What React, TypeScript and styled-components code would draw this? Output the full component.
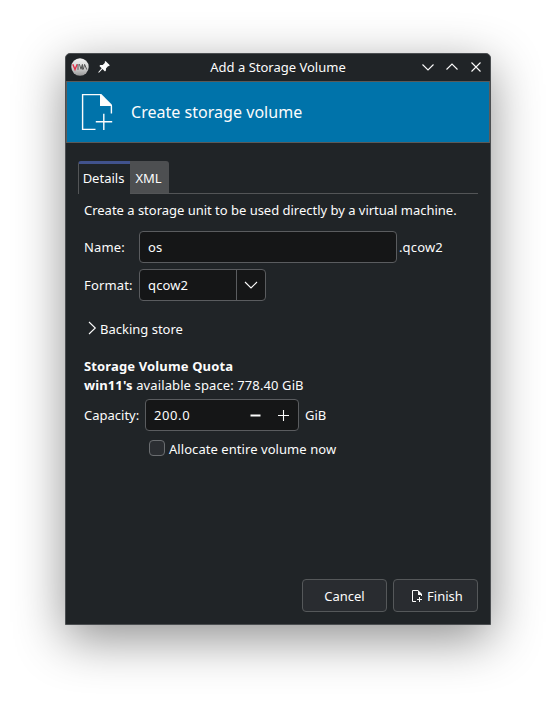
import React from "react";
import styled, { createGlobalStyle } from "styled-components";

const line = "#535557";

const Global = createGlobalStyle`
  * { box-sizing: border-box; }
  body {
    margin: 0;
    background: #fff;
    font-family: "Noto Sans", sans-serif;
    font-size: 13px;
    line-height: 18px;
    color: #fcfcfc;
  }
  button, input { font: inherit; color: inherit; letter-spacing: inherit; }
`;

const Desktop = styled.main`
  height: 702px;
  padding: 53px 65px 0;
  overflow: hidden;
`;

const Window = styled.section`
  width: 426px;
  height: 572px;
  display: flex;
  flex-direction: column;
  background: #202427;
  border: 1px solid #4b4e51;
  border-radius: 5px 5px 0 0;
  box-shadow: 0 14px 50px rgba(0, 0, 0, 0.44);
`;

const TitleBar = styled.header`
  height: 27px;
  flex: none;
  display: grid;
  grid-template-columns: 78px 1fr 78px;
  align-items: center;
`;

const TitleIcons = styled.div`
  display: flex;
  align-items: center;
  gap: 9px;
  padding-left: 5px;
  margin-top: -1px;
`;

const Title = styled.h1`
  margin: 0 0 1px;
  font-size: 13px;
  font-weight: 400;
  text-align: center;
`;

const WindowButtons = styled.div`
  display: flex;
  justify-content: flex-end;
  gap: 12px;
  padding-right: 8px;
  margin-top: -1px;
`;

const Icon = styled.svg`
  display: block;
  flex: none;
  overflow: visible;
`;

const Banner = styled.div`
  height: 62px;
  flex: none;
  display: flex;
  align-items: center;
  gap: 18px;
  padding-left: 14px;
  background: #0073aa;
  border: 1px solid #5b5a59;
`;

const BannerText = styled.h2`
  margin: 0;
  font-size: 16px;
  line-height: 22px;
  font-weight: 400;
  letter-spacing: 0.03px;
`;

const Body = styled.div`
  flex: 1;
  display: flex;
  flex-direction: column;
  padding: 18px 12px 12px;
`;

const Tabs = styled.nav`
  height: 33px;
  flex: none;
  display: flex;
  border-bottom: 1px solid ${line};
`;

const Tab = styled.button<{ $active?: boolean; $width: number }>`
  width: ${(p) => p.$width}px;
  height: ${(p) => (p.$active ? 33 : 32)}px;
  padding: ${(p) => (p.$active ? "0 2px 2px 0" : "2px 2px 0 0")};
  border: 0;
  border-left: ${(p) => (p.$active ? `1px solid ${line}` : "0")};
  border-top: ${(p) => (p.$active ? "3px solid #41528c" : "0")};
  border-radius: ${(p) => (p.$active ? "3px 0 0 0" : "0 3px 0 0")};
  background: ${(p) => (p.$active ? "#202427" : "#4d4f51")};
`;

const Page = styled.div`
  flex: 1;
  display: flex;
  flex-direction: column;
  padding: 7px 6px 0;
`;

const Row = styled.div<{ $top?: number; $height?: number; $left?: number; $tracking?: number }>`
  height: ${(p) => p.$height ?? 32}px;
  flex: none;
  display: flex;
  align-items: center;
  white-space: nowrap;
  margin-top: ${(p) => p.$top ?? 0}px;
  padding-left: ${(p) => p.$left ?? 0}px;
  letter-spacing: ${(p) => p.$tracking ?? 0}px;
`;

const Label = styled.label<{ $width: number }>`
  width: ${(p) => p.$width}px;
  flex: none;
`;

const Field = styled.div<{ $width: number }>`
  width: ${(p) => p.$width}px;
  height: 32px;
  flex: none;
  display: flex;
  align-items: center;
  background: #151617;
  border: 1px solid #5a5c5f;
  border-radius: 4px;
`;

const TextInput = styled.input<{ $tracking?: number }>`
  flex: 1;
  min-width: 0;
  height: 30px;
  padding: 0 8px;
  border: 0;
  outline: 0;
  background: transparent;
  letter-spacing: ${(p) => p.$tracking ?? 0.14}px;
`;

const DropButton = styled.span`
  width: 29px;
  height: 30px;
  display: grid;
  place-items: center;
  border-left: 1px solid #5a5c5f;
`;

const Stepper = styled.span`
  display: flex;
  gap: 17px;
  padding-right: 9px;
`;

const Suffix = styled.span<{ $gap: number }>`
  margin-left: ${(p) => p.$gap}px;
`;

const CheckBox = styled.span`
  width: 16px;
  height: 16px;
  margin: -2px 4px 0 0;
  background: #2b2e32;
  border: 1px solid #6a6d70;
  border-radius: 4px;
`;

const Actions = styled.footer`
  display: flex;
  justify-content: flex-end;
  gap: 6px;
`;

const Button = styled.button<{ $nudge?: number }>`
  width: 85px;
  height: 33px;
  display: flex;
  align-items: center;
  justify-content: center;
  gap: 4px;
  padding: 0 0 0 ${(p) => p.$nudge ?? 0}px;
  background: #292c30;
  border: 1px solid #55585a;
  border-radius: 4px;
`;

const Logo = () => (
  <Icon width="18" height="18" viewBox="0 0 18 18">
    <defs>
      <linearGradient id="disc" x1="0" y1="0" x2="0" y2="1">
        <stop offset="0" stopColor="#f2f2f2" />
        <stop offset="0.55" stopColor="#d2d2d2" />
        <stop offset="1" stopColor="#999" />
      </linearGradient>
    </defs>
    <circle cx="9" cy="9" r="8.7" fill="url(#disc)" />
    <path d="M1.8 6.2L4 11.4L6.2 6.2" fill="none" stroke="#e2304a" strokeWidth="1.4" />
    <path d="M7 6v5.8M8.4 6.2L10 11.2L11.4 6.4V11.6M12.2 11.6L13.6 6.4L15.8 11.6" fill="none" stroke="#555" strokeWidth="1" />
  </Icon>
);

const Pin = () => (
  <Icon width="12" height="12" viewBox="0 0 12 12" fill="#fcfcfc">
    <path d="M7.5 0L11.8 4.3L10.8 5.3L10.2 5L8 7.4L7.9 9.6L7 10.5L4.5 8.1L1.2 11.4L.3 11.7L.6 10.8L3.7 7.3L1.4 5L2.3 4.1L4.7 4L7 1.8L6.6 .9Z" />
  </Icon>
);

const Stroke = ({ w, h, d }: { w: number; h: number; d: string }) => (
  <Icon width={w} height={h} viewBox={`0 0 ${w} ${h}`} fill="none" stroke="#fcfcfc" strokeWidth="1.1">
    <path d={d} />
  </Icon>
);

const BigDoc = () => (
  <Icon width="32" height="38" viewBox="0 0 32 38" fill="none" stroke="#fcfcfc" strokeWidth="1.4">
    <path d="M14.5 36.4H1.6V1.6H19M30.4 13V20.5M22.8 20.7V37M14.8 28.7H31.2" />
    <path d="M19 1H20.3L31 11.7V13H19Z" fill="#fcfcfc" stroke="none" />
  </Icon>
);

const SmallDoc = () => (
  <Icon width="12" height="13" viewBox="0 0 12 13" fill="none" stroke="#fcfcfc">
    <path d="M5 12.5H1.5V1.5H7M10.5 5V7M8.5 8V13M6 10.5H11" />
    <path d="M7 1L11 5V6H7Z" fill="#fcfcfc" stroke="none" />
  </Icon>
);

export default function App() {
  return (
    <Desktop>
      <Global />
      <Window>
        <TitleBar>
          <TitleIcons>
            <Logo />
            <Pin />
          </TitleIcons>
          <Title>Add a Storage Volume</Title>
          <WindowButtons>
            <Stroke w={12} h={12} d="M.5 3.5L6 9L11.5 3.5" />
            <Stroke w={12} h={12} d="M.5 8.5L6 3L11.5 8.5" />
            <Stroke w={12} h={12} d="M1.5 1.5L10.5 10.5M10.5 1.5L1.5 10.5" />
          </WindowButtons>
        </TitleBar>
        <Banner>
          <BigDoc />
          <BannerText>Create storage volume</BannerText>
        </Banner>
        <Body>
          <Tabs>
            <Tab $active $width={52}>Details</Tab>
            <Tab $width={39}>XML</Tab>
          </Tabs>
          <Page>
            <Row $height={18} $tracking={-0.015}>Create a storage unit to be used directly by a virtual machine.</Row>
            <Row $top={12} $tracking={0.14}>
              <Label $width={55}>Name:</Label>
              <Field $width={258}>
                <TextInput defaultValue="os" />
              </Field>
              <Suffix $gap={2}>.qcow2</Suffix>
            </Row>
            <Row $top={6} $tracking={0.14}>
              <Label $width={55}>Format:</Label>
              <Field $width={127}>
                <TextInput defaultValue="qcow2" readOnly />
                <DropButton>
                  <Stroke w={14} h={8} d="M1 1L7 7L13 1" />
                </DropButton>
              </Field>
            </Row>
            <Row $top={19} $height={18} $left={4}>
              <Stroke w={12} h={14} d="M1 0L7.3 6L1 12" />
              Backing store
            </Row>
            <Row $top={19} $height={18} $tracking={0.14}>
              <b>Storage Volume Quota</b>
            </Row>
            <Row $top={1} $height={18} $tracking={0.11}>
              <span><b>win11's</b> available space: 778.40 GiB</span>
            </Row>
            <Row $top={5}>
              <Label $width={61}>Capacity:</Label>
              <Field $width={154}>
                <TextInput defaultValue="200.0" $tracking={0.6} />
                <Stepper>
                  <Stroke w={11} h={11} d="M.5 5H10.5M.5 6H10.5" />
                  <Stroke w={11} h={11} d="M0 5.5H11M5.5 0V11" />
                </Stepper>
              </Field>
              <Suffix $gap={6}>GiB</Suffix>
            </Row>
            <Row $top={9} $height={18} $left={65} $tracking={0.06}>
              <CheckBox />
              Allocate entire volume now
            </Row>
          </Page>
          <Actions>
            <Button>Cancel</Button>
            <Button $nudge={3}>
              <SmallDoc />
              Finish
            </Button>
          </Actions>
        </Body>
      </Window>
    </Desktop>
  );
}
